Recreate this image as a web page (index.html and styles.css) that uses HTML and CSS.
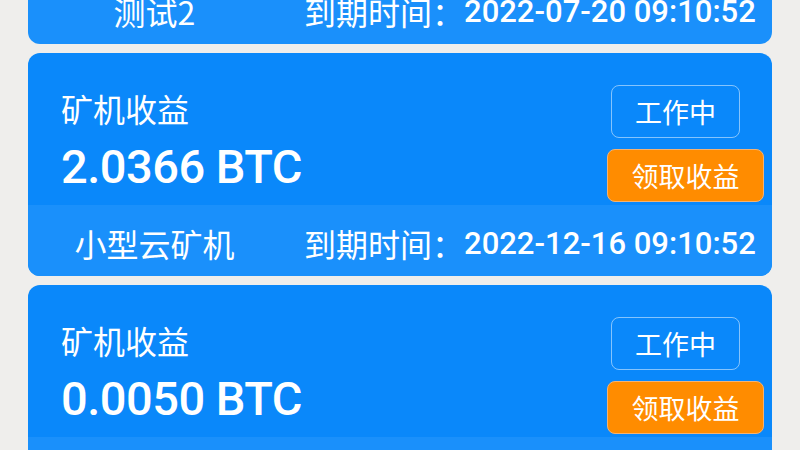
FILE: index.html
```html
<!DOCTYPE html>
<html lang="zh-CN">
<head>
<meta charset="utf-8">
<title>矿机收益</title>
<link rel="stylesheet" href="styles.css">
</head>
<body>
<div class="list">
  <div class="card">
    <div class="card-foot">
      <span class="name">测试2</span>
      <span class="expire"><span class="label">到期时间：</span><span class="date">2022-07-20 09:10:52</span></span>
    </div>
  </div>
  <div class="card">
    <div class="card-top">
      <div class="info">
        <div class="title">矿机收益</div>
        <div class="amount">2.0366 BTC</div>
      </div>
      <div class="actions">
        <div class="btn-status">工作中</div>
        <div class="btn-claim">领取收益</div>
      </div>
    </div>
    <div class="card-foot">
      <span class="name">小型云矿机</span>
      <span class="expire"><span class="label">到期时间：</span><span class="date">2022-12-16 09:10:52</span></span>
    </div>
  </div>
  <div class="card">
    <div class="card-top">
      <div class="info">
        <div class="title">矿机收益</div>
        <div class="amount">0.0050 BTC</div>
      </div>
      <div class="actions">
        <div class="btn-status">工作中</div>
        <div class="btn-claim">领取收益</div>
      </div>
    </div>
    <div class="card-foot"></div>
  </div>
</div>
</body>
</html>
```

FILE: styles.css
```css
html, body {
  margin: 0;
  padding: 0;
  background: #efeeec;
  height: 450px;
  overflow: hidden;
}
body {
  font-family: Roboto, "Noto Sans CJK SC", sans-serif;
  color: #ffffff;
}
.list {
  display: flex;
  flex-direction: column;
  gap: 9px;
  padding: 0 28px;
  margin-top: -27px;
}
.card {
  background: #0a88fa;
  border-radius: 12px;
  overflow: hidden;
}
.card-top {
  height: 152px;
  display: flex;
  justify-content: space-between;
}
.info {
  padding: 35px 0 0 33px;
  display: flex;
  flex-direction: column;
  gap: 14px;
}
.title {
  font-family: "Noto Sans CJK SC", sans-serif;
  font-size: 32px;
  line-height: 40px;
}
.amount {
  font-family: Roboto, sans-serif;
  font-weight: 500;
  font-size: 47px;
  line-height: 50px;
  letter-spacing: -0.5px;
}
.actions {
  padding: 32px 8px 0 0;
  display: flex;
  flex-direction: column;
  align-items: flex-end;
  gap: 11px;
}
.btn-status,
.btn-claim {
  font-family: "Noto Sans CJK SC", sans-serif;
  font-size: 27px;
  height: 53px;
  box-sizing: border-box;
  display: flex;
  align-items: center;
  justify-content: center;
  border-radius: 8px;
}
.btn-status {
  width: 129px;
  margin-right: 24px;
  border: 1px solid rgba(255, 255, 255, 0.5);
}
.btn-claim {
  width: 157px;
  background: #ff8c00;
  border: 1px solid #f3b273;
}
.card-foot {
  height: 71px;
  box-sizing: border-box;
  padding-top: 5px;
  background: #1a90fb;
  display: flex;
  align-items: center;
  font-size: 32px;
}
.name {
  width: 253px;
  text-align: center;
  font-family: "Noto Sans CJK SC", sans-serif;
}
.expire {
  margin-left: 23px;
  display: flex;
  align-items: center;
}
.label {
  font-family: "Noto Sans CJK SC", sans-serif;
}
.date {
  font-family: Roboto, sans-serif;
  font-weight: 500;
  font-size: 31px;
}
```
